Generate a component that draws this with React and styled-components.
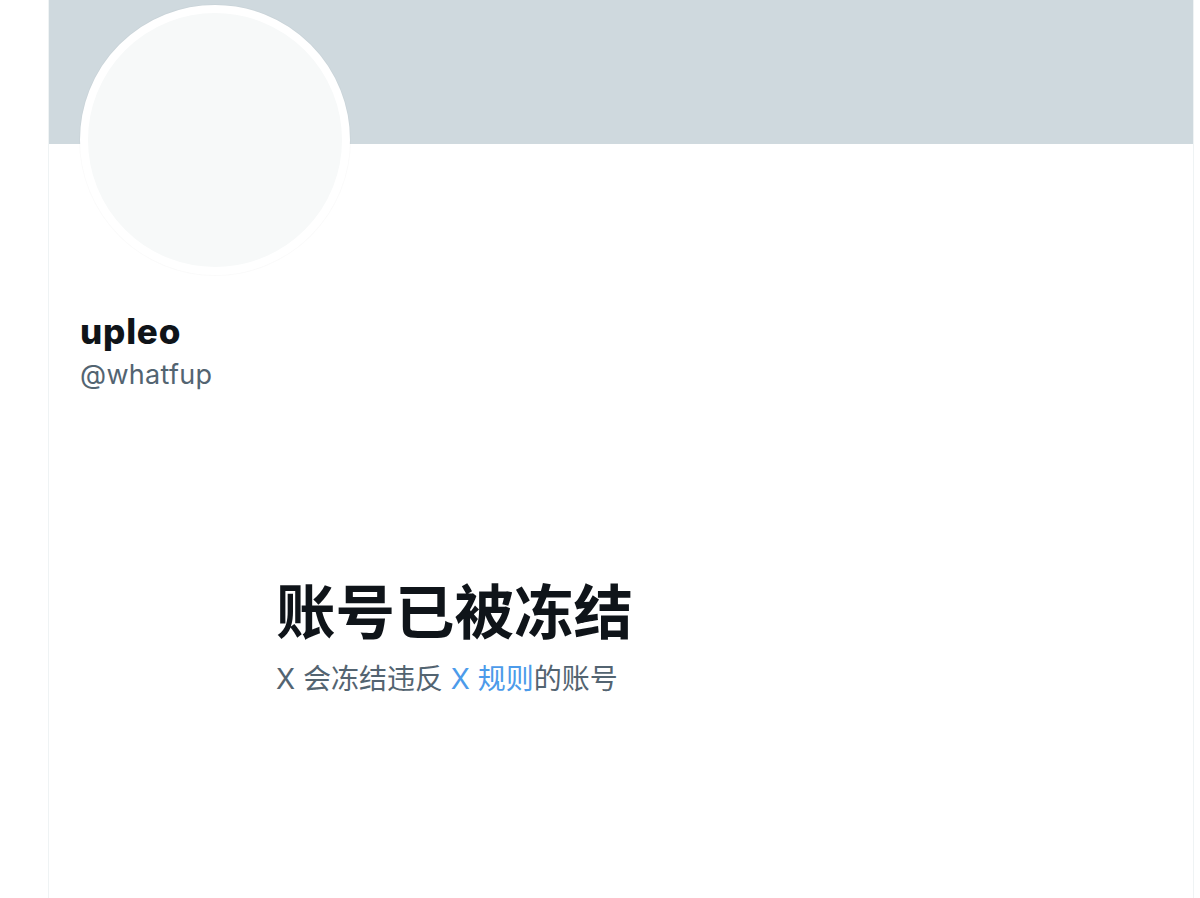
import React from 'react';
import styled, { createGlobalStyle } from 'styled-components';

const GlobalStyle = createGlobalStyle`
  html, body {
    margin: 0;
    padding: 0;
    background: #ffffff;
    height: 100%;
  }
  body {
    font-family: Inter, "Noto Sans", "Noto Sans CJK SC", sans-serif;
    color: #0f1419;
    overflow: hidden;
  }
`;

const Page = styled.div`
  display: flex;
  height: 898px;
  padding-left: 48px;
`;

const Column = styled.main`
  width: 1144px;
  height: 100%;
  border-left: 1px solid #eff3f4;
  border-right: 1px solid #eff3f4;
  display: flex;
  flex-direction: column;
`;

const Banner = styled.div`
  height: 144px;
  background: #cfd9de;
`;

const Profile = styled.section`
  padding: 0 31px;
  display: flex;
  flex-direction: column;
`;

const Avatar = styled.div`
  width: 254px;
  height: 254px;
  margin-top: -139px;
  border: 8px solid #ffffff;
  border-radius: 50%;
  background: #f7f9f9;
  box-shadow: 0 0 0 1px rgba(0, 0, 0, 0.02);
`;

const Name = styled.h1`
  margin: 34px 0 0;
  font-size: 35px;
  line-height: 44px;
  font-weight: 800;
  letter-spacing: 0.8px;
  color: #0f1419;
`;

const Handle = styled.div`
  margin-top: 4px;
  font-size: 27px;
  line-height: 36px;
  letter-spacing: 0.3px;
  color: #536471;
`;

const Notice = styled.section`
  padding: 179px 0 0 227px;
  display: flex;
  flex-direction: column;
`;

const Title = styled.h2`
  margin: 0;
  font-family: "Noto Sans CJK SC", sans-serif;
  font-size: 59.5px;
  line-height: 72px;
  font-weight: 700;
  color: #0f1419;
`;

const Body = styled.p`
  margin: 16px 0 0;
  font-family: Inter, "Noto Sans CJK SC", sans-serif;
  font-size: 28px;
  line-height: 38px;
  color: #536471;
`;

const RuleLink = styled.a`
  color: #4c9bea;
  text-decoration: none;
`;

export default function App() {
  return (
    <>
      <GlobalStyle />
      <Page>
        <Column>
          <Banner />
          <Profile>
            <Avatar />
            <Name>upleo</Name>
            <Handle>@whatfup</Handle>
          </Profile>
          <Notice>
            <Title>账号已被冻结</Title>
            <Body>
              X 会冻结违反 <RuleLink href="#">X 规则</RuleLink>的账号
            </Body>
          </Notice>
        </Column>
      </Page>
    </>
  );
}
